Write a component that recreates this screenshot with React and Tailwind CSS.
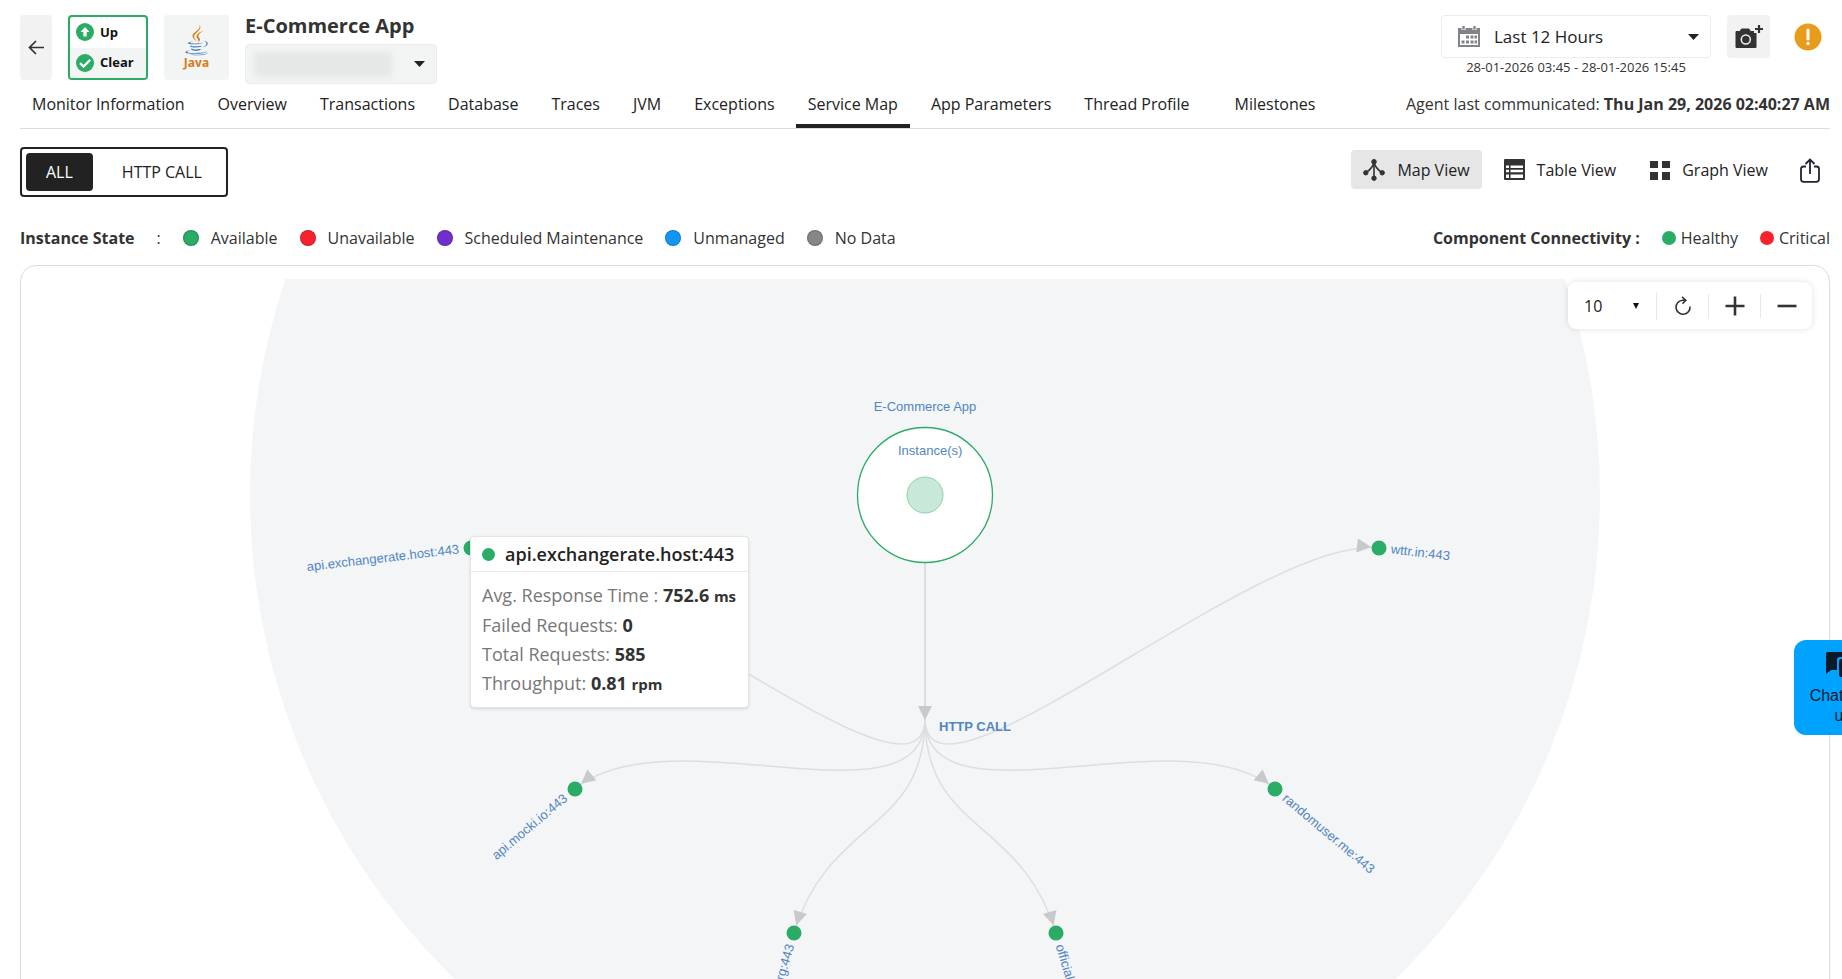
import React, { useState } from 'react';

const TABS = [
    'Monitor Information', 'Overview', 'Transactions', 'Database', 'Traces', 'JVM',
    'Exceptions', 'Service Map', 'App Parameters', 'Thread Profile', 'Milestones',
];

const STATES = [
    { label: 'Available', color: 'bg-[#2aab66]' },
    { label: 'Unavailable', color: 'bg-[#f5222d]' },
    { label: 'Scheduled Maintenance', color: 'bg-[#722ed1]' },
    { label: 'Unmanaged', color: 'bg-[#1296f5]' },
    { label: 'No Data', color: 'bg-[#868686]' },
];

// x / y are relative to the centre of the instance circle
const NODES = [
    { label: 'wttr.in:443', x: 454, y: 53 },
    { label: 'randomuser.me:443', x: 350, y: 294 },
    { label: 'official-joke-api', x: 131, y: 438 },
    { label: 'org:443', x: -131, y: 438 },
    { label: 'api.mocki.io:443', x: -350, y: 294 },
    { label: 'api.exchangerate.host:443', x: -454, y: 53 },
];

const HUB_RADIUS = 223;
const NODE_RADIUS = 457;
const MID_RADIUS = 337;

const Caret = ({ className }) => (
    <svg className={className} width="11" height="6" viewBox="0 0 11 6">
        <path d="M0 0h11L5.5 6z" fill="#222" />
    </svg>
);

const JavaLogo = () => (
    <svg width="24" height="32" viewBox="17 0 98 128">
        <g fill="#4a7fb8">
            <path d="M47.617 98.12s-4.767 2.774 3.397 3.71c9.892 1.13 14.947.968 25.845-1.092 0 0 2.871 1.795 6.873 3.351-24.439 10.47-55.308-.607-36.115-5.969zm-2.988-13.665s-5.348 3.959 2.823 4.805c10.567 1.091 18.91 1.18 33.354-1.6 0 0 1.993 2.025 5.132 3.131-29.542 8.64-62.446.68-41.309-6.336z" />
            <path d="M102.123 108.229s3.529 2.91-3.888 5.159c-14.102 4.272-58.706 5.56-71.094.171-4.451-1.938 3.899-4.625 6.526-5.192 2.739-.593 4.303-.485 4.303-.485-4.953-3.487-32.013 6.85-13.743 9.815 49.821 8.076 90.817-3.637 77.896-9.468zM49.912 70.294s-22.686 5.389-8.033 7.348c6.188.828 18.518.638 30.011-.326 9.39-.789 18.813-2.474 18.813-2.474s-3.308 1.419-5.704 3.053c-23.042 6.061-67.544 3.238-54.731-2.958 10.832-5.239 19.644-4.643 19.644-4.643zM90.609 93.041c23.421-12.167 12.591-23.86 5.032-22.285-1.848.385-2.677.72-2.677.72s.688-1.079 2-1.543c14.953-5.255 26.451 15.503-4.823 23.725 0-.002.359-.327.468-.617z" />
            <path d="M52.214 126.021c22.476 1.437 57-.8 57.817-11.436 0 0-1.571 4.032-18.577 7.231-19.186 3.612-42.854 3.191-56.887.874 0 .001 2.875 2.381 17.647 3.331z" />
        </g>
        <g fill="#d97a16">
            <path d="M69.802 61.271c6.025 6.935-1.58 13.17-1.58 13.17s15.289-7.891 8.269-17.777c-6.559-9.215-11.587-13.792 15.635-29.58 0 .001-42.731 10.67-22.324 34.187z" />
            <path d="M76.491 1.587S89.459 14.563 64.188 34.51c-20.266 16.006-4.621 25.13-.007 35.559-11.831-10.673-20.509-20.07-14.688-28.815C58.041 28.42 81.722 22.195 76.491 1.587z" />
        </g>
    </svg>
);

const Header = () => (
    <header className="flex items-start justify-between pt-[15px]">
        <div className="flex items-start gap-4">
            <button className="flex h-[65px] w-8 items-center justify-center rounded bg-[#f2f2f2]" aria-label="Back">
                <svg width="16" height="16" viewBox="0 0 16 16" fill="none" stroke="#333" strokeWidth="1.7">
                    <path d="M16 7.500H1.500M8 1L1.500 7.500L8 14" />
                </svg>
            </button>
            <div className="flex h-[65px] w-20 flex-col overflow-hidden rounded border-2 border-[#2aab66] text-[13px] font-bold text-[#111]">
                <div className="flex flex-1 items-center gap-[6px] pl-[6px]">
                    <svg width="18" height="18" viewBox="0 0 18 18">
                        <circle cx="9" cy="9" r="9" fill="#2aab66" />
                        <path d="M9 4L13.500 9H10.700V13.500H7.300V9H4.500z" fill="#fff" />
                    </svg>
                    Up
                </div>
                <div className="flex flex-1 items-center gap-[6px] bg-[#f3f5f5] pl-[6px]">
                    <svg width="18" height="18" viewBox="0 0 18 18">
                        <circle cx="9" cy="9" r="9" fill="#2aab66" />
                        <path d="M4 9.200L7.600 12.600L14.200 5.800" fill="none" stroke="#fff" strokeWidth="2.300" />
                    </svg>
                    Clear
                </div>
            </div>
            <div className="flex h-[65px] w-[65px] flex-col items-center rounded bg-[#f3f5f5] pt-[9px] text-xs leading-[14px] font-bold text-[#d97a16]">
                <JavaLogo />
                Java
            </div>
            <div className="flex flex-col gap-[7px]">
                <h1 className="text-xl leading-[22px] font-bold text-[#333]">E-Commerce App</h1>
                <div className="relative flex h-10 w-48 items-center rounded border border-[#ebeded] bg-[#f3f5f5]">
                    <select className="h-full w-full appearance-none bg-transparent" aria-label="Instance" />
                    <span className="pointer-events-none absolute left-2 h-[25px] w-[138px] bg-[#e5e6e6] blur-[3px]" />
                    <Caret className="pointer-events-none absolute right-[11px]" />
                </div>
            </div>
        </div>
        <div className="flex items-start gap-4">
            <div className="flex w-[270px] flex-col items-center">
                <div className="relative flex h-[43px] w-full items-center rounded border border-[#ececec]">
                    <svg className="pointer-events-none absolute left-4" width="22" height="21" viewBox="0 0 22 21">
                        <path d="M0 2h22v19H0z" fill="#808488" />
                        <path d="M2 8h18v11H2z" fill="#fff" />
                        <path d="M3.500 0h4v4h-4zM14.500 0h4v4h-4z" fill="#fff" />
                        <path d="M4.300 0h2.400v3.500H4.300zM15.300 0h2.400v3.500h-2.400z" fill="#808488" />
                        <path d="M8 9.500h3v3H8zM12.500 9.500h3v3h-3zM16.500 9.500h2.500v3h-2.500zM3.500 14.500h3v3h-3zM8 14.500h3v3H8zM12.500 14.500h3v3h-3zM16.500 14.500h2.500v3h-2.500z" fill="#808488" />
                    </svg>
                    <select className="h-full w-full appearance-none bg-transparent pl-[52px] text-[17px] text-[#222]" aria-label="Time range">
                        <option>Last 12 Hours</option>
                    </select>
                    <Caret className="pointer-events-none absolute right-[11px]" />
                </div>
                <p className="text-[13px] leading-[18px]">28-01-2026 03:45 - 28-01-2026 15:45</p>
            </div>
            <button className="flex h-[43px] w-[43px] items-center justify-center rounded bg-[#f2f2f2]" aria-label="Capture">
                <svg width="28" height="24" viewBox="0 0 28 24">
                    <path d="M1 6.500h4l1.500-2.500h7.500L15.500 6.500h5.500v16H1z" fill="#333" stroke="#333" strokeLinejoin="round" strokeWidth="1" />
                    <circle cx="10.800" cy="14.500" r="4.500" fill="none" stroke="#f2f2f2" strokeWidth="1.500" />
                    <path d="M19 0h9v8h-9z" fill="#f2f2f2" />
                    <path d="M24 0v8M20 4h8" stroke="#333" strokeWidth="2.200" />
                </svg>
            </button>
            <button className="px-2 pt-2" aria-label="Alerts">
                <svg width="28" height="28" viewBox="0 0 28 28">
                    <circle cx="14" cy="14" r="13.500" fill="#e89c1c" />
                    <path d="M14 7v9" stroke="#fff" strokeWidth="3" strokeLinecap="round" />
                    <circle cx="14" cy="20.500" r="1.700" fill="#fff" />
                </svg>
            </button>
        </div>
    </header>
);

const Tabs = () => {
    const [active, setActive] = useState('Service Map');

    return (
        <nav className="flex items-start justify-between border-b border-[#dcdcdc] pt-2">
            <div className="flex gap-[9px]">
                {TABS.map((tab) => (
                    <button key={tab}
                        className={`px-3 pb-2 leading-6 border-b-4 last:ml-3 text-[#222] ${tab === active ? 'border-[#222]' : 'border-transparent'}`}
                        onClick={() => setActive(tab)}
                    >
                        {tab}
                    </button>
                ))}
            </div>
            <p className="leading-6">Agent last communicated: <b>Thu Jan 29, 2026 02:40:27 AM</b></p>
        </nav>
    );
}

const Toolbar = () => {
    const [filter, setFilter] = useState('ALL');

    return (
        <div className="flex items-start justify-between pt-[18px]">
            <div className="flex h-[50px] gap-[9px] rounded border-2 border-[#222] p-1">
                {['ALL', 'HTTP CALL'].map((item) => (
                    <button key={item}
                        className={`rounded px-5 ${item === filter ? 'bg-[#222] text-white' : 'text-[#222]'}`}
                        onClick={() => setFilter(item)}
                    >
                        {item}
                    </button>
                ))}
            </div>
            <div className="flex gap-[10px] pt-[3px] text-[#222]">
                <button className="flex h-[39px] items-center gap-3 rounded bg-[#e6e6e6] px-3">
                    <svg width="22" height="22" viewBox="0 0 22 22" fill="#333" stroke="#333">
                        <path d="M11 3v16M11 3C10 8 7 11 3 13.500M11 3C12 8 15 11 19 13.500" fill="none" strokeWidth="1.600" />
                        <circle cx="11" cy="2.800" r="2.300" />
                        <circle cx="2.800" cy="13.800" r="2.200" />
                        <circle cx="19.200" cy="13.800" r="2.200" />
                        <circle cx="11" cy="19.200" r="2.200" />
                    </svg>
                    Map View
                </button>
                <button className="flex h-[39px] items-center gap-3 px-3">
                    <svg width="21" height="21" viewBox="0 0 21 21">
                        <rect width="21" height="21" rx="1" fill="#333" />
                        <path d="M2 6.500h3v2.500H2zM6.500 6.500H19v2.500H6.500zM2 10.700h3v2.500H2zM6.500 10.700H19v2.500H6.500zM2 15.500h3V19H2zM6.500 15.500H19V19H6.500z" fill="#fff" />
                    </svg>
                    Table View
                </button>
                <button className="flex h-[39px] items-center gap-3 px-3">
                    <svg width="20" height="20" viewBox="0 0 20 20">
                        <path d="M0 1h8v7H0zM12 1h8v7h-8zM0 12h8v8H0zM12 12h8v8h-8z" fill="#333" />
                    </svg>
                    Graph View
                </button>
                <button className="flex h-[41px] items-center px-[10px]" aria-label="Share">
                    <svg width="20" height="25" viewBox="0 0 20 25" fill="none" stroke="#223" strokeWidth="1.800">
                        <path d="M6 8.500H3.500Q1 8.500 1 11V21Q1 23.800 3.800 23.800H16.200Q19 23.800 19 21V11Q19 8.500 16.500 8.500H14M10 16V1.500M5.500 6L10 1.500L14.500 6" />
                    </svg>
                </button>
            </div>
        </div>
    );
}

const Legend = () => (
    <div className="mt-[29px] flex justify-between leading-6">
        <div className="flex gap-[22px]">
            <b>Instance State</b>
            <span>:</span>
            {STATES.map(({ label, color }) => (
                <span key={label} className="flex items-center gap-3">
                    <i className={`h-4 w-4 rounded-full border border-black/20 ${color}`} />
                    {label}
                </span>
            ))}
        </div>
        <div className="flex gap-[22px]">
            <b>Component Connectivity :</b>
            <span className="flex items-center gap-[5px]">
                <i className="h-[14px] w-[14px] rounded-full bg-[#2aab66]" />
                Healthy
            </span>
            <span className="flex items-center gap-[5px]">
                <i className="h-[14px] w-[14px] rounded-full bg-[#f5222d]" />
                Critical
            </span>
        </div>
    </div>
);

const MapNode = ({ label, x, y }) => {
    const angle = Math.atan2(y, x) * 180 / Math.PI;
    const left = x < 0;
    const k = MID_RADIUS / NODE_RADIUS;

    return (
        <g>
            <path d={`M0 ${HUB_RADIUS}C0 ${MID_RADIUS} ${x * k} ${y * k} ${x} ${y}`} fill="none" stroke="#dedede" strokeWidth="1.500" />
            <path d="M-8 0L-22 -7V7z" fill="#c8c9cb" transform={`translate(${x} ${y}) rotate(${angle})`} />
            <circle cx={x} cy={y} r="7.500" fill="#2aab66" />
            <text x={left ? -12 : 12} y="4" textAnchor={left ? 'end' : 'start'}
                transform={`translate(${x} ${y}) rotate(${left ? angle - 180 : angle})`}
            >
                {label}
            </text>
        </g>
    );
}

const ServiceMap = () => (
    <svg className="block h-[900px] w-full font-[Liberation_Sans,sans-serif] text-[13px]" fill="#5086c1">
        <svg x="50%" y="216" overflow="visible">
            <circle r="675" fill="#f3f5f7" />
            <path d="M0 68V212" stroke="#dedede" strokeWidth="2" />
            {NODES.map((node) => <MapNode key={node.label} {...node} />)}
            <path d="M-7 211H7L0 225z" fill="#c8c9cb" />
            <circle r="67.500" fill="#fff" stroke="#2aab66" strokeWidth="1.300" />
            <circle r="18" fill="#c8e8d8" stroke="#8fd0ae" />
            <text y="-84" textAnchor="middle">E-Commerce App</text>
            <text x="-27" y="-40">Instance(s)</text>
            <text x="14" y="236" fontWeight="bold">HTTP CALL</text>
        </svg>
    </svg>
);

const NodeTooltip = () => (
    <div className="absolute top-[270px] left-[calc(50%-455px)] w-[279px] rounded border border-[#e4e4e4] bg-white text-lg shadow-sm">
        <div className="flex h-[35px] items-center gap-[10px] border-b border-[#ebebeb] px-[11px] font-semibold text-[#222]">
            <i className="h-[13px] w-[13px] shrink-0 rounded-full bg-[#2aab66]" />
            api.exchangerate.host:443
        </div>
        <div className="px-[11px] pt-[9px] pb-2 leading-[29px] text-[#777]">
            <p>Avg. Response Time : <b className="text-[#333]">752.6 <span className="text-[15px]">ms</span></b></p>
            <p>Failed Requests: <b className="text-[#333]">0</b></p>
            <p>Total Requests: <b className="text-[#333]">585</b></p>
            <p>Throughput: <b className="text-[#333]">0.81 <span className="text-[15px]">rpm</span></b></p>
        </div>
    </div>
);

const ZoomControls = () => (
    <div className="absolute top-4 right-[17px] flex h-[47px] items-center rounded-lg bg-white shadow-[0_0_6px_rgba(0,0,0,0.12)]">
        <div className="relative flex items-center">
            <select className="w-[88px] appearance-none bg-transparent pl-4 text-[#222]" aria-label="Depth">
                <option>10</option>
            </select>
            <svg className="pointer-events-none absolute right-[17px]" width="6" height="6" viewBox="0 0 6 6">
                <path d="M0 0h6L3 6z" fill="#111" />
            </svg>
        </div>
        <button className="flex w-[52px] justify-center border-l border-[#e8e8e8] py-1" aria-label="Refresh">
            <svg width="18" height="20" viewBox="0 0 18 20" fill="none" stroke="#333" strokeWidth="1.600">
                <path d="M11 4.200H8.800A7 7 0 1 0 16 10.500M8 .8L11.800 4.200L8.500 7.800" />
            </svg>
        </button>
        <button className="flex w-[52px] justify-center border-l border-[#e8e8e8] py-[2px]" aria-label="Zoom in">
            <svg width="20" height="20" viewBox="0 0 20 20" stroke="#333" strokeWidth="2.600">
                <path d="M10 .5V19.500M.5 10H19.500" />
            </svg>
        </button>
        <button className="flex w-[52px] justify-center border-l border-[#e8e8e8] py-[2px]" aria-label="Zoom out">
            <svg width="20" height="20" viewBox="0 0 20 20" stroke="#333" strokeWidth="2.600">
                <path d="M.5 10H19.500" />
            </svg>
        </button>
    </div>
);

const App = () => (
    <div className="h-screen overflow-hidden bg-white pr-3 pl-5 font-[Open_Sans,sans-serif] text-base text-[#333]">
        <Header />
        <Tabs />
        <Toolbar />
        <Legend />
        <main className="relative mt-[15px] rounded-2xl border border-[#dcdcdc] pt-[13px]">
            <ServiceMap />
            <NodeTooltip />
            <ZoomControls />
        </main>
        <button className="fixed top-[640px] -right-[50px] flex h-[95px] w-[98px] flex-col items-center rounded-xl bg-[#00a2ff] pt-3 font-[Liberation_Sans,sans-serif] leading-5 text-[#0b1a2a]">
            <svg className="mb-[5px]" width="34" height="29" viewBox="0 0 34 29" fill="#0b1a2a">
                <path d="M2 0H24Q26 0 26 2V5H14Q11 5 11 8V18H5L0 22V2Q0 0 2 0z" />
                <path d="M15 7H32Q34 7 34 9V29L29 25H15Q13 25 13 23V9Q13 7 15 7z" />
            </svg>
            <span>Chat with</span>
            <span>us</span>
        </button>
    </div>
);

export default App;
